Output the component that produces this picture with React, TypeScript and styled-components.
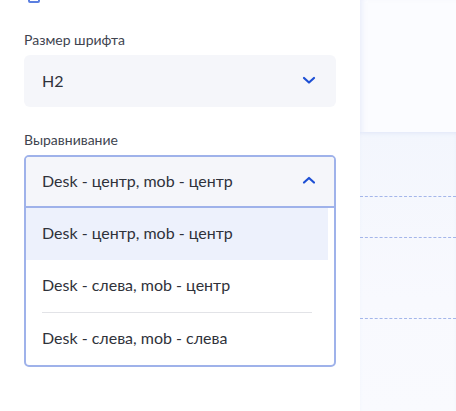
import * as React from 'react';
import styled, { createGlobalStyle } from 'styled-components';

const Global = createGlobalStyle`
  html, body {
    margin: 0;
    padding: 0;
    background: #ffffff;
  }
  body {
    font-family: Lato, "Noto Sans", sans-serif;
    -webkit-font-smoothing: antialiased;
  }
`;

const Page = styled.div({
  display: "flex",
  width: "456px",
  height: "411px",
  overflow: "hidden",
});

const Sidebar = styled.div({
  width: "360px",
  flexShrink: 0,
  boxSizing: "border-box",
  padding: "0 24px",
  background: "#ffffff",
  display: "flex",
  flexDirection: "column",
});

const CheckMark = styled.div({
  width: "12px",
  height: "12px",
  marginTop: "-9px",
  marginLeft: "4px",
  boxSizing: "border-box",
  border: "2px solid #5b7fe0",
  borderRadius: "2px",
});

const Field = styled.div<{ $top: number }>`
  display: flex;
  flex-direction: column;
  gap: 5px;
  margin-top: ${p => p.$top}px;
`;

const Label = styled.div({
  fontSize: "14px",
  lineHeight: "20px",
  color: "#40444f",
});

const SelectBox = styled.div({
  height: "52px",
  boxSizing: "border-box",
  display: "flex",
  alignItems: "center",
  justifyContent: "space-between",
  padding: "0 20px 2px 18px",
  background: "#f5f6fa",
  borderRadius: "6px",
  fontSize: "16px",
  color: "#2f323a",
});

const Dropdown = styled.div({
  boxSizing: "border-box",
  border: "2px solid #9fb2ea",
  borderRadius: "5px",
  overflow: "hidden",
  background: "#ffffff",
});

const DropHead = styled.div({
  height: "51px",
  boxSizing: "border-box",
  display: "flex",
  alignItems: "center",
  justifyContent: "space-between",
  padding: "0 18px 3px 16px",
  background: "#f5f6fa",
  borderBottom: "2px solid #9fb2ea",
  fontSize: "16px",
  color: "#2f323a",
});

const OptionList = styled.div({
  display: "flex",
  flexDirection: "column",
  paddingRight: "6px",
});

const Option = styled.div<{ $active?: boolean }>`
  height: 52px;
  box-sizing: border-box;
  display: flex;
  align-items: center;
  padding: 0 16px 4px;
  font-size: 16px;
  color: #2f323a;
  background: ${p => (p.$active ? "#edf1fc" : "transparent")};
`;

const Divider = styled.div({
  height: "1px",
  margin: "0 16px",
  background: "#e2e3e7",
});

const Canvas = styled.div({
  flex: 1,
  display: "flex",
  flexDirection: "column",
  background: "#fbfcff",
  boxShadow: "inset 5px 0 5px -3px rgba(200, 210, 240, 0.35)",
});

const TopArea = styled.div({
  height: "132px",
  flexShrink: 0,
});

const Block = styled.div({
  flex: 1,
  display: "flex",
  flexDirection: "column",
  background: "linear-gradient(180deg, #f3f6fd 0%, #f8f9fe 60%, #f9fafe 100%)",
  boxShadow: "inset 0 3px 4px -2px rgba(210, 220, 245, 0.6)",
});

const Row = styled.div<{ $h: number }>`
  height: ${p => p.$h}px;
  flex-shrink: 0;
  box-sizing: border-box;
  border-bottom: 1px dashed #a4b6ea;
`;

const Chevron = ({ up }: { up?: boolean }) => (
  <svg width="14" height="14" viewBox="0 0 14 14" fill="none">
    <path
      d={up ? "M2 9.5 L7 5 L12 9.5" : "M2 5 L7 9.5 L12 5"}
      stroke="#1d4fd4"
      strokeWidth="2.2"
      strokeLinecap="round"
      strokeLinejoin="round"
    />
  </svg>
);

const options = [
  "Desk - центр, mob - центр",
  "Desk - слева, mob - центр",
  "Desk - слева, mob - слева",
];

export default function App() {
  return (
    <Page>
      <Global />
      <Sidebar>
        <CheckMark />
        <Field $top={27}>
          <Label>Размер шрифта</Label>
          <SelectBox>
            <span>H2</span>
            <Chevron />
          </SelectBox>
        </Field>
        <Field $top={23}>
          <Label>Выравнивание</Label>
          <Dropdown>
            <DropHead>
              <span>{options[0]}</span>
              <Chevron up />
            </DropHead>
            <OptionList>
              <Option $active>{options[0]}</Option>
              <Option>{options[1]}</Option>
              <Divider />
              <Option>{options[2]}</Option>
            </OptionList>
          </Dropdown>
        </Field>
      </Sidebar>
      <Canvas>
        <TopArea />
        <Block>
          <Row $h={65} />
          <Row $h={41} />
          <Row $h={81} />
        </Block>
      </Canvas>
    </Page>
  );
}
